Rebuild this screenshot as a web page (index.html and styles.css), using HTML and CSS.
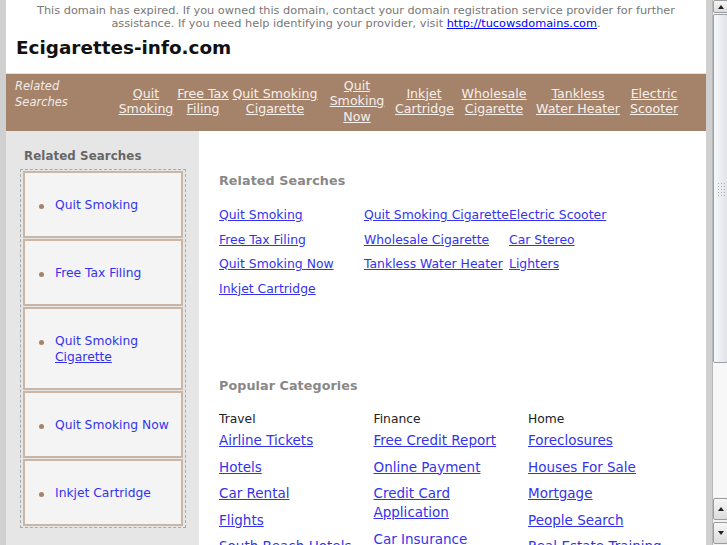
FILE: index.html
```html
<!DOCTYPE html>
<html>
<head>
<meta charset="utf-8">
<link rel="stylesheet" href="styles.css">
</head>
<body>
<div class="page">
  <div class="notice">This domain has expired. If you owned this domain, contact your domain registration service provider for further assistance. If you need help identifying your provider, visit <a href="#">http://tucowsdomains.com</a>.</div>
  <h1 class="logo">Ecigarettes-info.com</h1>
  <div class="nav">
    <div class="nav-label">Related<br>Searches</div>
    <div class="nav-cell w1"><a href="#">Quit<br>Smoking</a></div>
    <div class="nav-cell w2"><a href="#">Free Tax<br>Filing</a></div>
    <div class="nav-cell w3"><a href="#">Quit Smoking<br>Cigarette</a></div>
    <div class="nav-cell w4"><a href="#">Quit<br>Smoking<br>Now</a></div>
    <div class="nav-cell w5"><a href="#">Inkjet<br>Cartridge</a></div>
    <div class="nav-cell w6"><a href="#">Wholesale<br>Cigarette</a></div>
    <div class="nav-cell w7"><a href="#">Tankless<br>Water Heater</a></div>
    <div class="nav-cell w8"><a href="#">Electric<br>Scooter</a></div>
  </div>
  <div class="content">
    <div class="sidebar">
      <div class="side-title">Related Searches</div>
      <ul class="side-list">
        <li><a href="#">Quit Smoking</a></li>
        <li><a href="#">Free Tax Filing</a></li>
        <li><a href="#">Quit Smoking <span class="u">Cigarette</span></a></li>
        <li><a href="#">Quit Smoking Now</a></li>
        <li><a href="#">Inkjet Cartridge</a></li>
      </ul>
    </div>
    <div class="main">
      <div class="sec-title">Related Searches</div>
      <div class="rel-grid">
        <a href="#">Quit Smoking</a>
        <a href="#">Quit Smoking Cigarette</a>
        <a href="#">Electric Scooter</a>
        <a href="#">Free Tax Filing</a>
        <a href="#">Wholesale Cigarette</a>
        <a href="#">Car Stereo</a>
        <a href="#">Quit Smoking Now</a>
        <a href="#">Tankless Water Heater</a>
        <a href="#">Lighters</a>
        <a href="#">Inkjet Cartridge</a>
      </div>
      <div class="sec-title pop">Popular Categories</div>
      <div class="cats">
        <div class="cat">
          <div class="cat-head">Travel</div>
          <a href="#">Airline Tickets</a>
          <a href="#">Hotels</a>
          <a href="#">Car Rental</a>
          <a href="#">Flights</a>
          <a href="#">South Beach Hotels</a>
        </div>
        <div class="cat">
          <div class="cat-head">Finance</div>
          <a href="#">Free Credit Report</a>
          <a href="#">Online Payment</a>
          <a href="#">Credit Card Application</a>
          <a href="#">Car Insurance</a>
        </div>
        <div class="cat">
          <div class="cat-head">Home</div>
          <a href="#">Foreclosures</a>
          <a href="#">Houses For Sale</a>
          <a href="#">Mortgage</a>
          <a href="#">People Search</a>
          <a href="#">Real Estate Training</a>
        </div>
      </div>
    </div>
  </div>
</div>
<div class="gutter"></div>
<div class="scrollbar">
  <div class="sb-btn top"><span class="arr up"></span></div>
  <div class="sb-thumb"><div class="grip"></div></div>
  <div class="sb-track"></div>
  <div class="sb-btn"><span class="arr up"></span></div>
  <div class="sb-btn"><span class="arr down"></span></div>
</div>
</body>
</html>
```
FILE: styles.css
```css
html, body {
  margin: 0;
  padding: 0;
  height: 545px;
  overflow: hidden;
}
body {
  display: flex;
  background: #d0d0d0;
  font-family: "DejaVu Sans", sans-serif;
  padding-left: 6px;
  box-sizing: border-box;
}
.page {
  flex: 0 0 700px;
  background: #fff;
  height: 545px;
  overflow: hidden;
}
.gutter {
  flex: 0 0 6px;
}
.notice {
  font-size: 11.3px;
  line-height: 13px;
  color: #777;
  text-align: center;
  padding: 4px 0 0;
  height: 26px;
}
.notice a {
  color: #00f;
}
.logo {
  margin: 0;
  padding: 7px 0 0 10px;
  height: 36px;
  font-size: 18.4px;
  line-height: 22px;
  color: #111;
  font-weight: bold;
}
.nav {
  display: flex;
  align-items: center;
  background: #a5826a;
  height: 58px;
  padding-bottom: 3px;
  border-top: 1px solid #e6e0dc;
  box-sizing: border-box;
}
.nav-label {
  align-self: flex-start;
  width: 102px;
  padding: 5px 0 0 9px;
  font-size: 11.5px;
  font-style: italic;
  line-height: 15.5px;
  color: #f2ece8;
}
.nav-cell {
  text-align: center;
  font-size: 12.6px;
  line-height: 15.5px;
}
.nav-cell a {
  color: #f6f0ea;
}
.w1 { width: 58px; }
.w2 { width: 56px; }
.w3 { width: 88px; }
.w4 { width: 76px; }
.w5 { width: 58px; }
.w6 { width: 82px; }
.w7 { width: 86px; }
.w8 { width: 66px; }

.content {
  display: flex;
  height: 420px;
}
.sidebar {
  width: 179px;
  background: #e6e6e6;
  padding: 17px 0 0 14px;
}
.side-title {
  font-size: 11.8px;
  font-weight: bold;
  color: #666;
  line-height: 16px;
  padding-left: 4px;
  margin-bottom: 5px;
  letter-spacing: 0.1px;
}
.side-list {
  list-style: none;
  margin: 0;
  padding: 1px 2px;
  width: 160px;
  border: 1px dashed #aaa;
}
.side-list li {
  background: #f4f4f4;
  border: 2px solid #c9b6a4;
  padding: 23.5px 8px 23.5px 30px;
  margin-bottom: 1px;
  font-size: 12.3px;
  line-height: 16px;
  position: relative;
}
.side-list li:last-child {
  margin-bottom: 0;
}
.side-list li::before {
  content: "";
  position: absolute;
  left: 14px;
  top: 31px;
  width: 5px;
  height: 5px;
  border-radius: 50%;
  background: #a5826a;
}
.side-list a {
  color: #3333ee;
  text-decoration: none;
}
.side-list .u {
  text-decoration: underline;
}

.main {
  flex: 1;
  padding: 42px 0 0 20px;
}
.sec-title {
  font-size: 12.7px;
  font-weight: bold;
  color: #888;
  line-height: 16px;
  letter-spacing: 0.1px;
}
.rel-grid {
  display: grid;
  grid-template-columns: 145px 145px 145px;
  margin-top: 14px;
}
.rel-grid a {
  font-size: 12.4px;
  line-height: 24.5px;
  color: #3333ee;
  white-space: nowrap;
}
.pop {
  margin-top: 77px;
}
.cats {
  display: flex;
  margin-top: 17px;
}
.cat {
  width: 154.5px;
  display: flex;
  flex-direction: column;
  align-items: flex-start;
}
.cat-head {
  font-size: 12.3px;
  line-height: 16px;
  color: #222;
  margin-bottom: 4px;
}
.cat a {
  font-size: 13.5px;
  line-height: 19px;
  color: #3333ee;
  margin-bottom: 7.5px;
  max-width: 140px;
}

.scrollbar {
  flex: 0 0 15px;
  height: 545px;
  display: flex;
  flex-direction: column;
  background: #f2f2f2;
  border-left: 1px solid #b8b8b8;
}
.sb-btn {
  flex: 0 0 22px;
  background: linear-gradient(#f6f6f6, #dcdcdc);
  border: 1px solid #9c9c9c;
  border-radius: 2px;
  margin: 1px 0;
  display: flex;
  align-items: center;
  justify-content: center;
  box-sizing: border-box;
}
.sb-btn.top {
  flex-basis: 13px;
  margin-top: 0;
}
.arr {
  width: 0;
  height: 0;
  border-left: 3px solid transparent;
  border-right: 3px solid transparent;
}
.arr.up {
  border-bottom: 4px solid #222;
}
.arr.down {
  border-top: 4px solid #222;
}
.sb-thumb {
  flex: 0 0 349px;
  background: linear-gradient(90deg, #f6f7fa, #e2e4ea);
  border: 1px solid #9aa0aa;
  border-radius: 2px;
  box-sizing: border-box;
  display: flex;
  align-items: center;
  justify-content: center;
}
.grip {
  width: 8px;
  height: 14px;
  background-image: radial-gradient(#a8adb5 40%, transparent 45%);
  background-size: 3px 3px;
}
.sb-track {
  flex: 1;
  background: #f7f7f7;
}
```
